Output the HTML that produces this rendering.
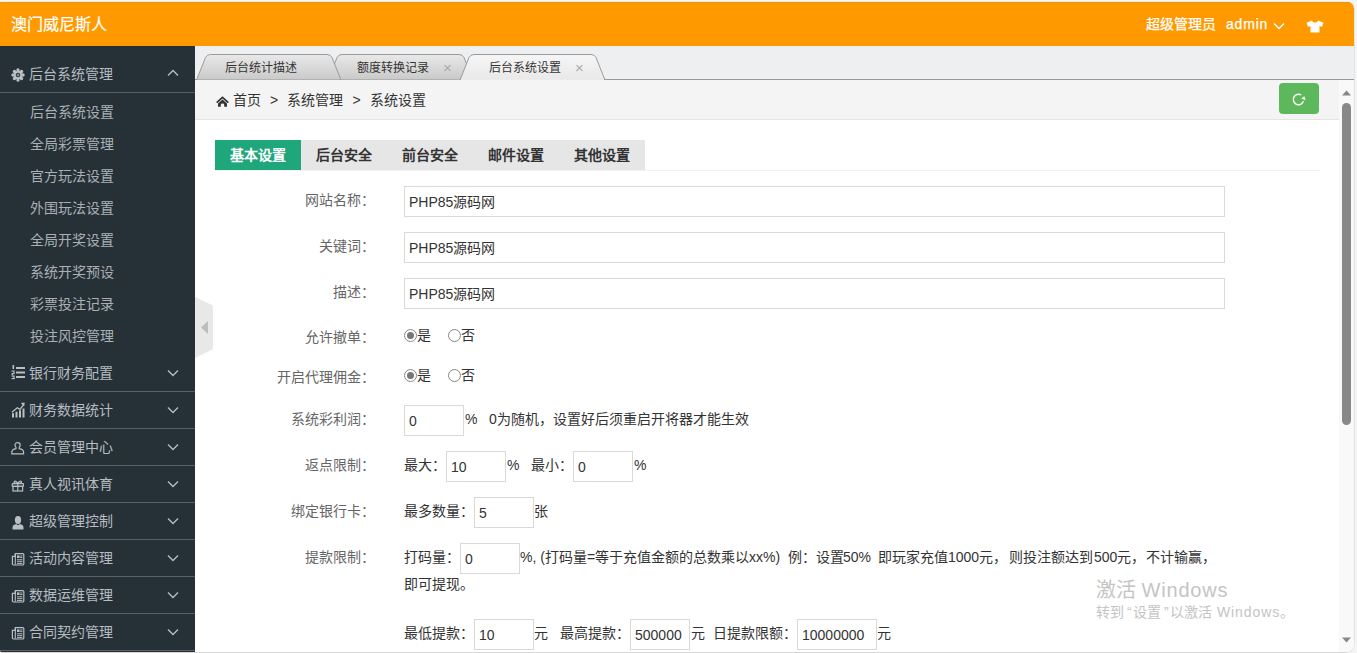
<!DOCTYPE html>
<html lang="zh-CN">
<head>
<meta charset="utf-8">
<style>
*{box-sizing:border-box;margin:0;padding:0}
html,body{width:1357px;height:653px;overflow:hidden;background:#f5f5f6;font-family:"Liberation Sans",sans-serif}
.win{position:absolute;left:0;top:2px;width:1355px;height:651px;border-right:1px solid #e4e4e4;border-bottom:1px solid #d6d6d6;border-radius:1px 7px 9px 2px;overflow:hidden;background:#fff}
.topl{position:absolute;left:0;top:1px;width:1348px;height:1px;background:#fcefdc}
.hdr{position:absolute;left:0;top:0;width:1354px;height:44px;background:#fe9900;border-top:1px solid #ec9412;color:#fff}
.logo{position:absolute;left:11px;top:12px;-webkit-text-stroke:0.2px #fff;font-size:16px;line-height:20px;color:#fff}
.user{position:absolute;left:1146px;top:12px;-webkit-text-stroke:0.25px #fff;font-size:14px;line-height:18px;color:#fff;white-space:nowrap}
.side{position:absolute;left:0;top:44px;width:195px;height:606px;background:#263037}
.grp{position:absolute;left:0;width:195px;height:37px;border-bottom:1px solid #5a6166;color:#b6bcc1;font-size:14px}
.grp .t{position:absolute;left:29px;top:9px;line-height:18px}
.grp svg.ic{position:absolute;left:11px;top:11px}
.grp svg.ch{position:absolute;left:167px;top:14px}
.sub{position:absolute;left:30px;margin-top:-1px;font-size:14px;line-height:18px;color:#aab0b5}
.tabs{position:absolute;left:195px;top:44px;width:1159px;height:34px;background:#eeeff1}
.tabs svg{position:absolute;left:0;top:0}
.tabtx{position:absolute;top:14px;font-size:12px;line-height:16px;color:#333}
.tabx{position:absolute;top:14px;font-size:15px;line-height:16px;color:#aaa}
.frame{position:absolute;left:195px;top:78px;width:1159px;height:572px;background:#fff}
.crumb{position:absolute;left:0;top:0;width:1144px;height:40px;background:#f4f4f4;border-bottom:1px solid #e4e4e4}
.crumb .c{position:absolute;top:11px;font-size:14px;line-height:18px;color:#333;white-space:nowrap}
.refresh{position:absolute;left:1084px;top:3px;width:40px;height:31px;background:#5db85c;border-radius:4px}
.refresh svg{position:absolute;left:13px;top:9px}
.sb{position:absolute;left:1144px;top:0;width:15px;height:572px;background:#f9f9f9}
.collapse{position:absolute;left:195px;top:295px}
.ftabs{position:absolute;left:20px;top:62px;width:430px;height:30px;background:#e6e6e6}
.ftab{position:absolute;top:0;height:30px;font-size:14px;line-height:30px;font-weight:bold;color:#333;text-align:center}
.fline{position:absolute;left:20px;top:92px;width:1105px;height:1px;background:#f2f2f2}
.lbl{position:absolute;left:0;margin-top:-1px;width:180px;font-size:14px;line-height:18px;color:#666;text-align:right;white-space:nowrap}
.txt{position:absolute;margin-top:-1px;font-size:14px;line-height:18px;color:#333;white-space:nowrap}
.inp{position:absolute;height:31px;border:1px solid #d9d9d9;background:#fff;font-size:14px;color:#333;padding-left:4px;line-height:30px;white-space:nowrap}
.rad{position:absolute;width:13px;height:13px;border:1px solid #888;border-radius:50%;background:#fff}
.rad.on::after{content:"";position:absolute;left:2px;top:2px;width:7px;height:7px;border-radius:50%;background:#777}
.wm1{position:absolute;left:901px;top:498px;font-size:20px;line-height:24px;color:#c4c4c4;white-space:nowrap}
.wm2{position:absolute;left:901px;top:523px;font-size:14px;line-height:18px;color:#c4c4c4;white-space:nowrap}
</style>
</head>
<body>
<div class="topl"></div>
<div class="win">
  <div class="hdr">
    <div class="logo">澳门威尼斯人</div>
    <div class="user">超级管理员</div><div class="user" style="left:1226px;letter-spacing:0.8px">admin</div>
    <svg style="position:absolute;left:1273px;top:19px" width="12" height="8" viewBox="0 0 12 8"><path d="M1 1.5L6 6.5L11 1.5" fill="none" stroke="#fff" stroke-width="1.5"/></svg>
    <svg style="position:absolute;left:1306px;top:17px" width="18" height="13" viewBox="0 0 18 13"><path d="M6 0.5C6.5 2 7.5 2.6 9 2.6C10.5 2.6 11.5 2 12 0.5L17.5 2.8L16 6.8L13.5 6V12.5H4.5V6L2 6.8L0.5 2.8Z" fill="#fff"/></svg>
  </div>
  <div class="side">
    <div class="grp" style="top:10px;height:37px">
      <svg class="ic" width="14" height="14" viewBox="0 0 14 14" style="left:11px;top:12px"><g fill="#b9bfc4"><circle cx="7.00" cy="2.00" r="1.7"/><circle cx="10.54" cy="3.46" r="1.7"/><circle cx="12.00" cy="7.00" r="1.7"/><circle cx="10.54" cy="10.54" r="1.7"/><circle cx="7.00" cy="12.00" r="1.7"/><circle cx="3.46" cy="10.54" r="1.7"/><circle cx="2.00" cy="7.00" r="1.7"/><circle cx="3.46" cy="3.46" r="1.7"/><circle cx="7" cy="7" r="4.3"/></g><circle cx="7" cy="7" r="2.3" fill="#3a444b"/><circle cx="7" cy="7" r="1.0" fill="#9aa1a6"/></svg>
      <span class="t">后台系统管理</span>
      <svg class="ch" width="12" height="8" viewBox="0 0 12 8" style="top:13px"><path d="M1 6.5L6 1.5L11 6.5" fill="none" stroke="#b6bcc1" stroke-width="1.4"/></svg>
    </div>
    <div class="sub" style="top:58px">后台系统设置</div>
    <div class="sub" style="top:90px">全局彩票管理</div>
    <div class="sub" style="top:122px">官方玩法设置</div>
    <div class="sub" style="top:154px">外围玩法设置</div>
    <div class="sub" style="top:186px">全局开奖设置</div>
    <div class="sub" style="top:218px">系统开奖预设</div>
    <div class="sub" style="top:250px">彩票投注记录</div>
    <div class="sub" style="top:282px">投注风控管理</div>
    <div class="grp" style="top:309px">
      <svg class="ic" width="14" height="15" viewBox="0 0 14 15" style="top:10px"><g fill="#b9bfc4"><rect x="5" y="2" width="9" height="2"/><rect x="5" y="6.5" width="9" height="2"/><rect x="5" y="11" width="9" height="2"/><rect x="1.5" y="0" width="1.6" height="4"/><rect x="0.6" y="5.5" width="3" height="1.2"/><rect x="2.4" y="6.5" width="1.2" height="1.5"/><rect x="0.6" y="8" width="3" height="1.2"/><rect x="0.6" y="9" width="1.2" height="1.3"/><rect x="0.6" y="10.5" width="3" height="1.2"/><rect x="2.4" y="11.5" width="1.2" height="2.5"/><rect x="0.6" y="13" width="3" height="1.2"/></g></svg>
      <span class="t">银行财务配置</span>
      <svg class="ch" width="12" height="8" viewBox="0 0 12 8"><path d="M1 1.5L6 6.5L11 1.5" fill="none" stroke="#b6bcc1" stroke-width="1.4"/></svg>
    </div>
    <div class="grp" style="top:346px">
      <svg class="ic" width="14" height="16" viewBox="0 0 14 16" style="top:10px"><g fill="#b9bfc4"><rect x="1" y="11.2" width="2" height="4.3"/><rect x="4.5" y="9.8" width="2" height="5.7"/><rect x="8" y="8.3" width="2" height="7.2"/><rect x="11.5" y="6.5" width="2" height="9"/><path d="M9.8 1.1L13.7 0.6L13.2 4.5Z"/></g><path d="M0.9 10.2L6.3 5.8L8.9 7.3L12.4 3.0" fill="none" stroke="#b9bfc4" stroke-width="1.3"/></svg>
      <span class="t">财务数据统计</span>
      <svg class="ch" width="12" height="8" viewBox="0 0 12 8"><path d="M1 1.5L6 6.5L11 1.5" fill="none" stroke="#b6bcc1" stroke-width="1.4"/></svg>
    </div>
    <div class="grp" style="top:383px">
      <svg class="ic" width="14" height="14" viewBox="0 0 14 14" style="top:13px"><path d="M5 5.4C4 4.5 4 3.4 4 2.7C4 1.3 5.2 0.6 6.6 0.6C8 0.6 9.2 1.3 9.2 2.7C9.2 3.4 9.2 4.5 8.2 5.4V6.7C10.5 7.1 12.6 8.3 12.6 10.3V11.8H0.8V10.3C0.8 8.3 2.9 7.1 5 6.7Z" fill="none" stroke="#b9bfc4" stroke-width="1.2"/></svg>
      <span class="t">会员管理中心</span>
      <svg class="ch" width="12" height="8" viewBox="0 0 12 8"><path d="M1 1.5L6 6.5L11 1.5" fill="none" stroke="#b6bcc1" stroke-width="1.4"/></svg>
    </div>
    <div class="grp" style="top:420px">
      <svg class="ic" width="14" height="13" viewBox="0 0 14 13" style="top:13.5px"><g fill="none" stroke="#b9bfc4" stroke-width="1.2"><rect x="1.2" y="3.6" width="11.2" height="2.8" rx="0.6"/><rect x="2" y="6.4" width="9.6" height="4.6"/><path d="M6.8 3.6V11"/><path d="M6.8 3.4C5.8 1 3.3 0.4 3.1 2C3 3 4.3 3.4 6.8 3.4C9.3 3.4 10.6 3 10.5 2C10.3 0.4 7.8 1 6.8 3.4"/></g></svg>
      <span class="t">真人视讯体育</span>
      <svg class="ch" width="12" height="8" viewBox="0 0 12 8"><path d="M1 1.5L6 6.5L11 1.5" fill="none" stroke="#b6bcc1" stroke-width="1.4"/></svg>
    </div>
    <div class="grp" style="top:457px">
      <svg class="ic" width="14" height="14" viewBox="0 0 14 14" style="top:12.5px;left:12px"><g fill="#b9bfc4"><ellipse cx="6" cy="4" rx="3.1" ry="3.9"/><path d="M0.5 13.5V11.2C0.5 9.3 2.3 8.2 4.2 7.9L6 9.2L7.8 7.9C9.7 8.2 11.5 9.3 11.5 11.2V13.5Z"/></g></svg>
      <span class="t">超级管理控制</span>
      <svg class="ch" width="12" height="8" viewBox="0 0 12 8"><path d="M1 1.5L6 6.5L11 1.5" fill="none" stroke="#b6bcc1" stroke-width="1.4"/></svg>
    </div>
    <div class="grp" style="top:494px">
      <svg class="ic news" width="14" height="14" viewBox="0 0 14 14" style="top:12.5px"><use href="#news"/></svg>
      <span class="t">活动内容管理</span>
      <svg class="ch" width="12" height="8" viewBox="0 0 12 8"><path d="M1 1.5L6 6.5L11 1.5" fill="none" stroke="#b6bcc1" stroke-width="1.4"/></svg>
    </div>
    <div class="grp" style="top:531px">
      <svg class="ic" width="14" height="14" viewBox="0 0 14 14" style="top:12.5px"><use href="#news"/></svg>
      <span class="t">数据运维管理</span>
      <svg class="ch" width="12" height="8" viewBox="0 0 12 8"><path d="M1 1.5L6 6.5L11 1.5" fill="none" stroke="#b6bcc1" stroke-width="1.4"/></svg>
    </div>
    <div class="grp" style="top:568px">
      <svg class="ic" width="14" height="14" viewBox="0 0 14 14" style="top:12.5px"><use href="#news"/></svg>
      <span class="t">合同契约管理</span>
      <svg class="ch" width="12" height="8" viewBox="0 0 12 8"><path d="M1 1.5L6 6.5L11 1.5" fill="none" stroke="#b6bcc1" stroke-width="1.4"/></svg>
    </div>
  </div>
  <svg width="0" height="0" style="position:absolute"><defs><g id="news"><path d="M4.3 0.6H11.8Q12.8 0.6 12.8 1.6V11Q12.8 12 11.8 12H2.6Q1.4 12 1.4 10.8V3.4H4.3Z" fill="none" stroke="#b9bfc4" stroke-width="1.2"/><path d="M4.3 1V11.6" stroke="#b9bfc4" stroke-width="1.1"/><g fill="#b9bfc4"><rect x="6" y="2.4" width="2.6" height="2.6"/><rect x="9.2" y="2.5" width="2.2" height="1"/><rect x="9.2" y="4.1" width="2.2" height="1"/><rect x="6" y="6.3" width="5.4" height="1"/><rect x="6" y="8.2" width="5.4" height="1"/><rect x="6" y="10.0" width="5.4" height="0.9"/></g></g></defs></svg>
  <div class="tabs">
    <svg width="1159" height="34" viewBox="0 0 1159 34">
      <defs>
        <linearGradient id="gi" x1="0" y1="0" x2="0" y2="1"><stop offset="0" stop-color="#e9e9e9"/><stop offset="1" stop-color="#c9c9c9"/></linearGradient>
        <linearGradient id="ga" x1="0" y1="0" x2="0" y2="1"><stop offset="0" stop-color="#f6f6f6"/><stop offset="1" stop-color="#e9e9ea"/></linearGradient>
      </defs>
      <path d="M0 33.5H1159" stroke="#9a9a9a" stroke-width="1"/>
      <path d="M133 34L142 11.5Q143.5 8.5 147 8.5H264Q267.5 8.5 269 11.5L278 34Z" fill="url(#gi)" stroke="#9a9a9a" stroke-width="1"/>
      <path d="M1.5 34L10.5 11.5Q12 8.5 15.5 8.5H132Q135.5 8.5 137 11.5L146 34Z" fill="url(#gi)" stroke="#9a9a9a" stroke-width="1"/>
      <path d="M265 34L274 11.5Q275.5 8.5 279 8.5H396Q399.5 8.5 401 11.5L410 34Z" fill="url(#ga)" stroke="#9a9a9a" stroke-width="1"/>
      <rect x="266" y="33" width="143" height="2" fill="#ebebeb"/>
    </svg>
    <span class="tabtx" style="left:30px">后台统计描述</span>
    <span class="tabtx" style="left:162px">额度转换记录</span>
    <span class="tabx" style="left:248px">×</span>
    <span class="tabtx" style="left:294px">后台系统设置</span>
    <span class="tabx" style="left:380px">×</span>
  </div>
  <div class="frame">
    <div class="crumb">
      <svg style="position:absolute;left:20.5px;top:16px" width="13" height="11" viewBox="0 0 13 11"><path d="M6.5 0.2L12.9 5.9L11.7 7.2L6.5 2.6L1.3 7.2L0.1 5.9Z" fill="#333"/><path d="M6.5 3.6L11 7.5V10.8H8.2V8.6Q8.2 7.6 6.5 7.6Q4.8 7.6 4.8 8.6V10.8H2V7.5Z" fill="#333"/></svg>
      <span class="c" style="left:38px">首页</span><span class="c" style="left:75px">&gt;</span><span class="c" style="left:92px">系统管理</span><span class="c" style="left:157.5px">&gt;</span><span class="c" style="left:175px">系统设置</span>
      <div class="refresh"><svg width="15" height="14" viewBox="0 0 15 14" style="left:12.5px;top:10px"><path d="M9.1 2.0A5.2 5.2 0 1 0 11.4 8.3" fill="none" stroke="#fff" stroke-width="1.4"/><path d="M9.4 6.4L14 6.4L11.7 3.2Z" fill="#fff" transform="rotate(20 11.7 5.5)"/></svg></div>
    </div>
    <div class="form" style="position:absolute;left:0;top:-2px;width:1144px;height:573px">
    <div class="ftabs">
      <div class="ftab" style="left:0;width:86px;background:#1fa67a;color:#fff">基本设置</div>
      <div class="ftab" style="left:86px;width:86px">后台安全</div>
      <div class="ftab" style="left:172px;width:86px">前台安全</div>
      <div class="ftab" style="left:258px;width:86px">邮件设置</div>
      <div class="ftab" style="left:344px;width:86px">其他设置</div>
    </div>
    <div class="fline"></div>

    <div class="lbl" style="top:114px">网站名称：</div>
    <div class="inp" style="left:209px;top:108px;width:821px">PHP85源码网</div>
    <div class="lbl" style="top:160px">关键词：</div>
    <div class="inp" style="left:209px;top:154px;width:821px">PHP85源码网</div>
    <div class="lbl" style="top:206px">描述：</div>
    <div class="inp" style="left:209px;top:200px;width:821px">PHP85源码网</div>

    <div class="lbl" style="top:251px">允许撤单：</div>
    <div class="rad on" style="left:209px;top:251px"></div><div class="txt" style="left:222px;top:249px">是</div>
    <div class="rad" style="left:253px;top:251px"></div><div class="txt" style="left:266px;top:249px">否</div>
    <div class="lbl" style="top:291px">开启代理佣金：</div>
    <div class="rad on" style="left:209px;top:291px"></div><div class="txt" style="left:222px;top:289px">是</div>
    <div class="rad" style="left:253px;top:291px"></div><div class="txt" style="left:266px;top:289px">否</div>

    <div class="lbl" style="top:333px">系统彩利润：</div>
    <div class="inp" style="left:209px;top:327px;width:60px">0</div>
    <div class="txt" style="left:270px;top:333px">%&nbsp;&nbsp;&nbsp;0为随机，设置好后须重启开将器才能生效</div>

    <div class="lbl" style="top:379px">返点限制：</div>
    <div class="txt" style="left:209px;top:379px">最大：</div>
    <div class="inp" style="left:251px;top:373px;width:60px">10</div>
    <div class="txt" style="left:312px;top:379px">%</div>
    <div class="txt" style="left:336px;top:379px">最小：</div>
    <div class="inp" style="left:378px;top:373px;width:60px">0</div>
    <div class="txt" style="left:439px;top:379px">%</div>

    <div class="lbl" style="top:425px">绑定银行卡：</div>
    <div class="txt" style="left:209px;top:425px">最多数量：</div>
    <div class="inp" style="left:279px;top:419px;width:60px">5</div>
    <div class="txt" style="left:339px;top:425px">张</div>

    <div class="lbl" style="top:471px">提款限制：</div>
    <div class="txt" style="left:209px;top:471px">打码量：</div>
    <div class="inp" style="left:265px;top:465px;width:60px">0</div>
    <div class="txt" style="left:325px;top:471px">%, (打码量=等于充值金额的总数乘以xx%)</div><div class="txt" style="left:593px;top:471px">例：设置</div><div class="txt" style="left:648px;top:471px">50%</div><div class="txt" style="left:683px;top:471px">即玩家充值</div><div class="txt" style="left:753px;top:471px">1000元，</div><div class="txt" style="left:814px;top:471px">则投注额达到</div><div class="txt" style="left:899px;top:471px">500元，</div><div class="txt" style="left:951px;top:471px">不计输赢，</div>
    <div class="txt" style="left:209px;top:498px">即可提现。</div>

    <div class="txt" style="left:209px;top:547px">最低提款：</div>
    <div class="inp" style="left:279px;top:541px;width:60px">10</div>
    <div class="txt" style="left:339px;top:547px">元</div>
    <div class="txt" style="left:365px;top:547px">最高提款：</div>
    <div class="inp" style="left:435px;top:541px;width:60px">500000</div>
    <div class="txt" style="left:496px;top:547px">元</div>
    <div class="txt" style="left:518px;top:547px">日提款限额：</div>
    <div class="inp" style="left:602px;top:541px;width:80px">10000000</div>
    <div class="txt" style="left:682px;top:547px">元</div>
    </div>

    <div class="wm1">激活 <span style="letter-spacing:0.8px">Windows</span></div>
    <div class="wm2">转到<span style="margin-left:3px;margin-right:1.3px">“</span>设置<span style="margin-left:3px;margin-right:1.3px">”</span>以激活</div><div class="wm2" style="left:1022px;letter-spacing:0.9px">Windows。</div>

    <div class="sb">
      <svg style="position:absolute;left:3px;top:10px" width="9" height="6" viewBox="0 0 9 6"><path d="M0 5.5L4.5 0.5L9 5.5Z" fill="#888"/></svg>
      <div style="position:absolute;left:3px;top:23px;width:9px;height:322px;border-radius:5px;background:#888"></div>
      <svg style="position:absolute;left:3px;top:557px" width="9" height="6" viewBox="0 0 9 6"><path d="M0 0.5L4.5 5.5L9 0.5Z" fill="#888"/></svg>
    </div>
  </div>
  <svg class="collapse" width="19" height="64" viewBox="0 0 19 64"><path d="M0 0L18 8.5V52L0 61Z" fill="#e8e8e8"/><path d="M6 30.5L13 24V37Z" fill="#bdbdbd"/></svg>
</div>
</body>
</html>
